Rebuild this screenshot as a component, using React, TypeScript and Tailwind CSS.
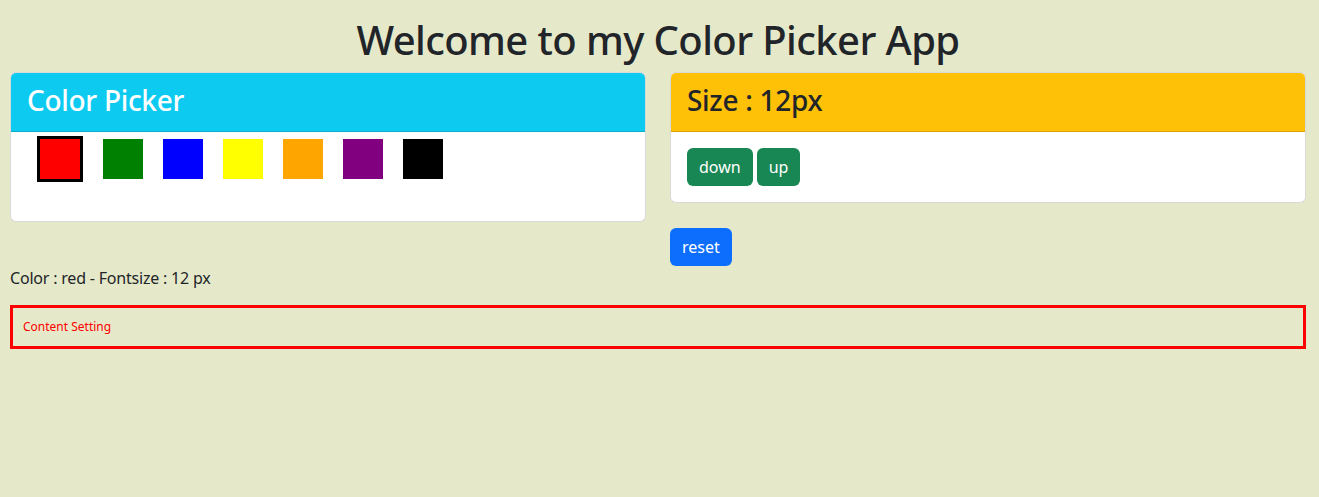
import { useState } from "react";

const colors = ["red", "green", "blue", "yellow", "orange", "purple", "black"];

const App: React.FC = () => {
    const [color, setColor] = useState("red");
    const [size, setSize] = useState(12);

    return (
        <div className="min-h-[497px] bg-[#e6e9c9] pl-[10px] pr-[13px] text-[#212529] font-['Noto_Sans',sans-serif]">
            <h1 className="pt-4 mb-2 text-center text-[40px] leading-[48px] font-medium tracking-[-0.6px]">
                Welcome to my Color Picker App
            </h1>

            <div className="grid grid-cols-2 gap-x-6 items-start">
                {/* color card */}
                <div className="bg-white border border-black/15 rounded-md overflow-hidden">
                    <div className="h-[59px] bg-[#0dcaf0] border-b border-black/15 px-4 pb-[5px] flex items-center">
                        <h2 className="text-[28px] font-medium tracking-[-0.3px] text-white">Color Picker</h2>
                    </div>
                    <div className="h-[89px] pl-[26px] pt-[4px]">
                        <div className="h-[46px] flex items-center gap-5">
                            {colors.map((c) => (
                                <div
                                    key={c}
                                    onClick={() => setColor(c)}
                                    className={c === color ? "w-[46px] h-[46px] border-[3px] border-black" : "w-10 h-10"}
                                    style={{ backgroundColor: c }}
                                />
                            ))}
                        </div>
                    </div>
                </div>

                {/* size card */}
                <div className="bg-white border border-black/15 rounded-md overflow-hidden">
                    <div className="h-[59px] bg-[#ffc107] border-b border-black/15 px-4 pb-[5px] flex items-center">
                        <h2 className="text-[28px] font-medium tracking-[-0.3px]">Size : {size}px</h2>
                    </div>
                    <div className="p-4 flex gap-1">
                        <button
                            onClick={() => setSize(size - 1)}
                            className="h-[38px] px-3 bg-[#198754] text-white rounded-md"
                        >
                            down
                        </button>
                        <button
                            onClick={() => setSize(size + 1)}
                            className="h-[38px] px-3 bg-[#198754] text-white rounded-md"
                        >
                            up
                        </button>
                    </div>
                </div>

                <div />
                <div className="mt-[6px]">
                    <button
                        onClick={() => { setColor("red"); setSize(12); }}
                        className="h-[38px] px-3 bg-[#0d6efd] text-white rounded-md"
                    >
                        reset
                    </button>
                </div>
            </div>

            <p className="leading-6 tracking-[-0.2px]">Color : {color} - Fontsize : {size} px</p>

            <div className="mt-[15px] border-[3px] border-[#ff0000] p-[10px]">
                <p className="text-[#ff0000] leading-[18px]" style={{ fontSize: size }}>Content Setting</p>
            </div>
        </div>
    );
};

export default App;
